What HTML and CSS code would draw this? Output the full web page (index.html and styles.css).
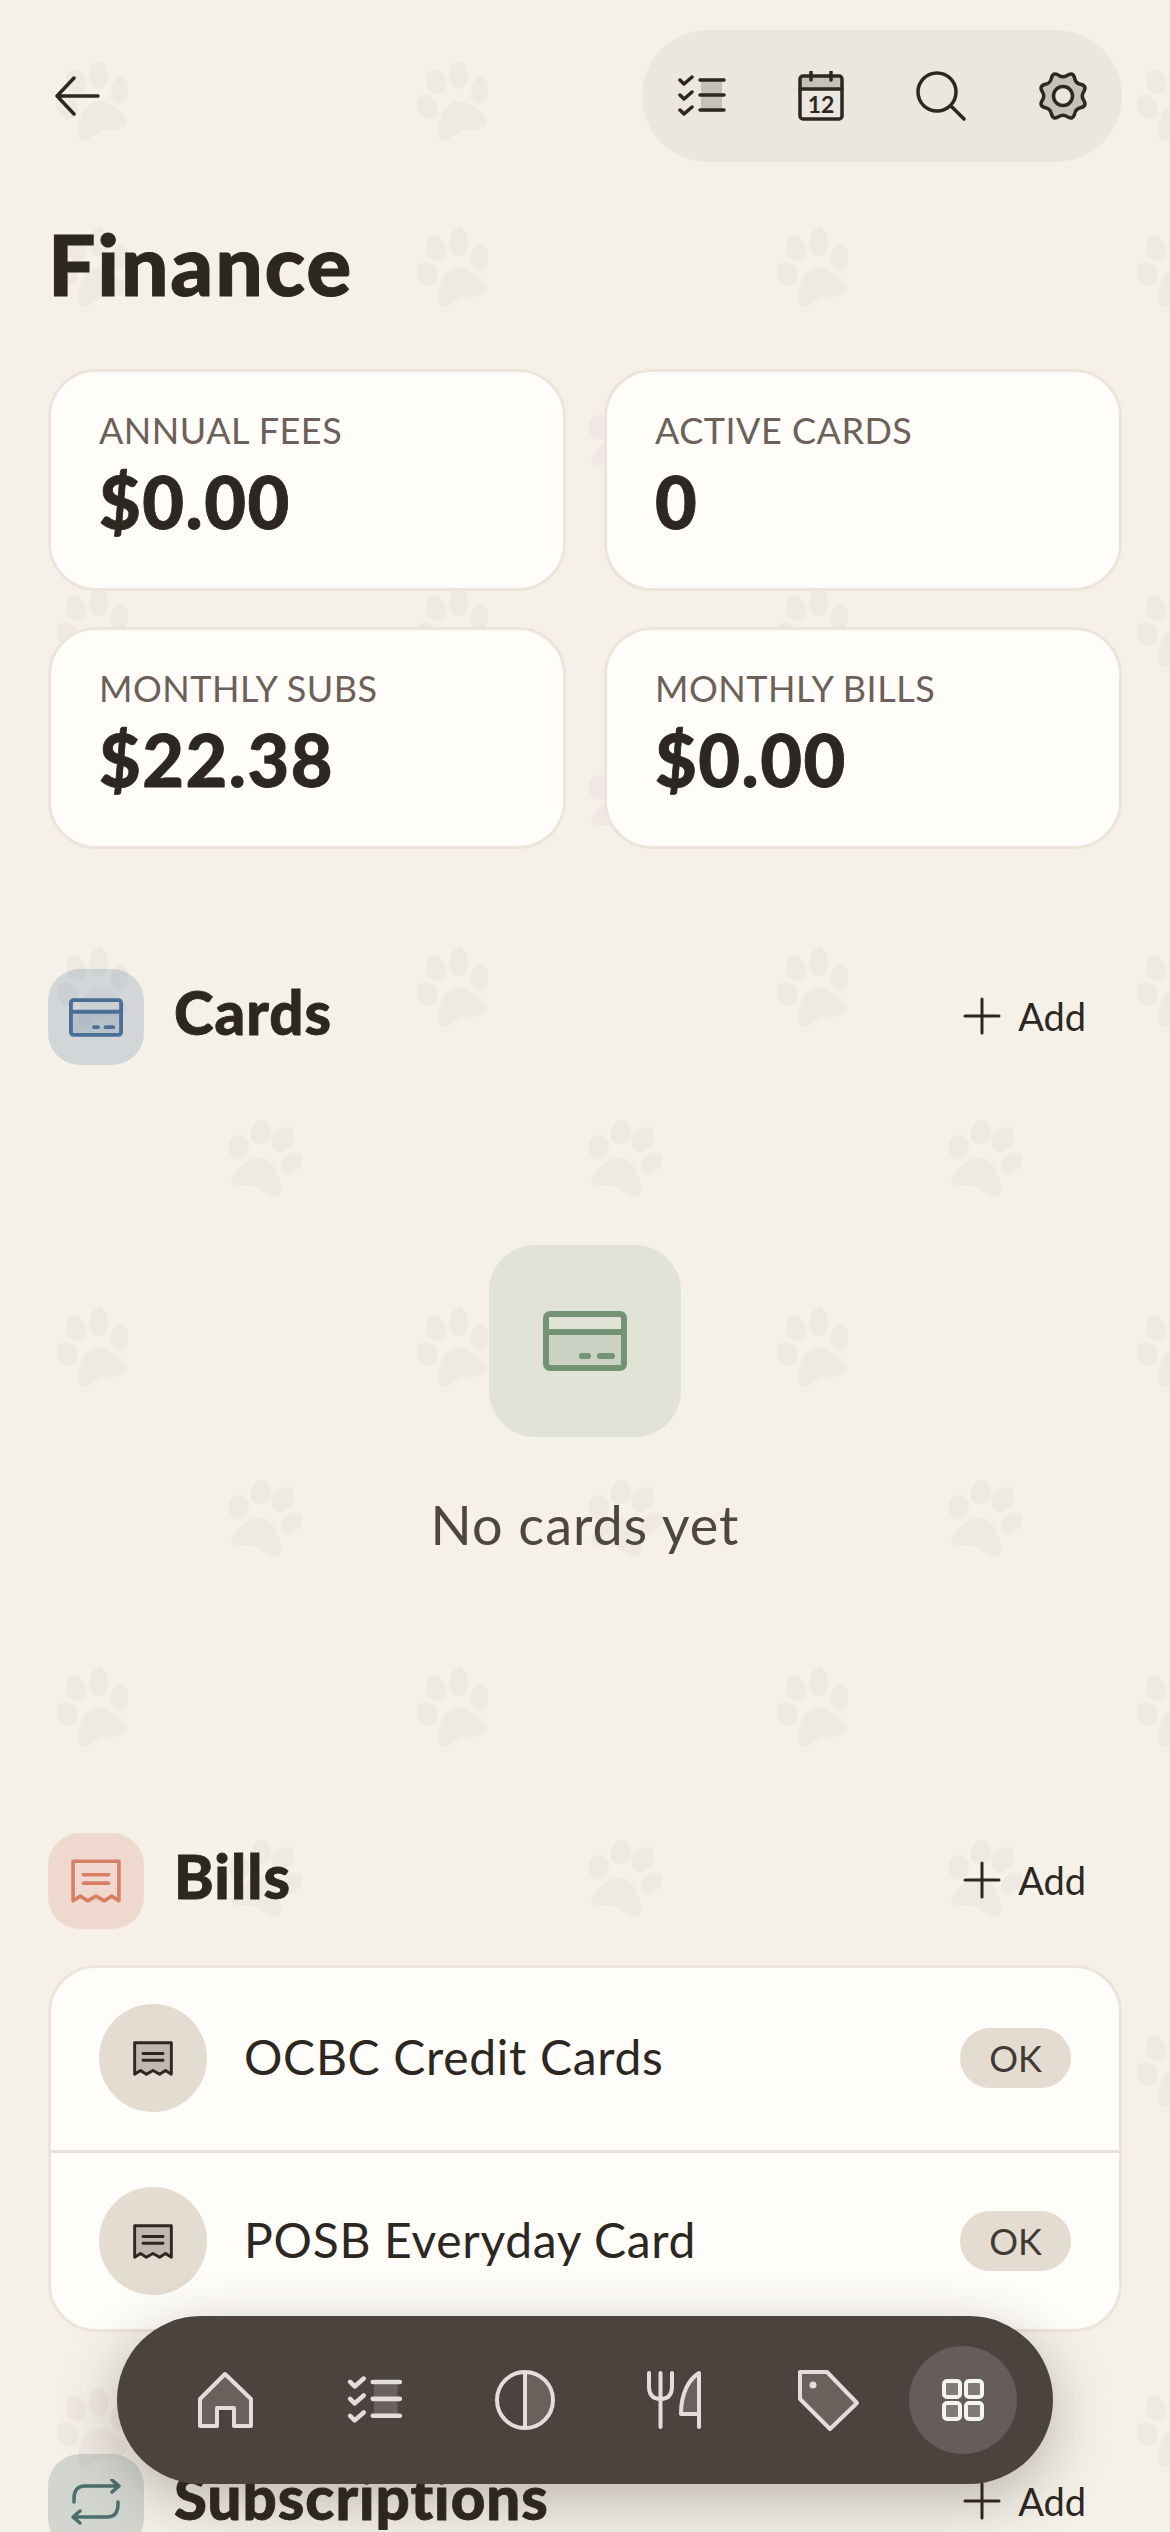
FILE: index.html
```html
<!DOCTYPE html>
<html lang="en">
<head>
    <meta charset="UTF-8">
    <meta name="viewport" content="width=device-width, initial-scale=1.0">
    <title>Finance</title>
    <link rel="stylesheet" href="styles.css">
</head>
<body>
    <div class="screen">
        <!-- paw wallpaper -->
        <svg class="paws" width="1170" height="2532" aria-hidden="true">
            <defs>
                <g id="paw">
                    <g transform="translate(-37.5 -40) scale(0.3333)">
                        <ellipse cx="62" cy="60" rx="30" ry="38" transform="rotate(-20 62 60)"/>
                        <ellipse cx="130" cy="40" rx="29" ry="42"/>
                        <ellipse cx="192" cy="85" rx="26" ry="40" transform="rotate(8 192 85)"/>
                        <ellipse cx="35" cy="135" rx="31" ry="38" transform="rotate(-30 35 135)"/>
                        <path d="M68 215C66 175 85 117 130 117C165 117 215 160 215 175C215 205 175 205 150 203C125 203 100 235 88 235C75 235 68 225 68 215Z"/>
                    </g>
                </g>
                <pattern id="paw-tile" width="360" height="360" patternUnits="userSpaceOnUse">
                    <use href="#paw" transform="translate(93 269)"/>
                    <use href="#paw" transform="translate(263 78) rotate(35)"/>
                </pattern>
            </defs>
            <use href="#paw" transform="translate(93 102)"/>
            <use href="#paw" transform="translate(453 102)"/>
            <use href="#paw" transform="translate(813 102)"/>
            <use href="#paw" transform="translate(1173 102)"/>
            <rect class="paw-fill" y="180" width="1170" height="2352" fill="url(#paw-tile)"/>
        </svg>

        <div class="page">
            <header class="topbar">
                <svg class="icon back" width="46" height="40" viewBox="0 0 46 40"><path d="M44 20H3M20 2L3 20L20 38"/></svg>
                <div class="toolbar">
                    <svg class="icon" width="48" height="46" viewBox="0 0 48 46">
                        <rect class="tint" x="23" y="7" width="21" height="32"/>
                        <path d="M2 7L6 11L14 4M2 22L6 26L14 19M2 37L6 41L14 34M22 7H46M22 22H46M22 37H46"/>
                    </svg>
                    <svg class="icon" width="46" height="50" viewBox="0 0 46 50">
                        <path class="tint" d="M2 6H44V18H2Z"/>
                        <rect x="2" y="5" width="42" height="43" rx="3"/>
                        <path d="M2 18H44M13 1V9M33 1V9"/>
                        <text class="cal-day" x="23" y="42">12</text>
                    </svg>
                    <svg class="icon" width="50" height="50" viewBox="0 0 50 50">
                        <circle cx="21" cy="21" r="19"/>
                        <path d="M35 35L48 48"/>
                    </svg>
                    <svg class="icon" width="50" height="50" viewBox="0 0 50 50">
                        <path class="tint" d="M20.9 4.4Q25 7 29.1 4.4Q35.1 .5 36.7 7.5Q37.7 12.3 42.5 13.3Q49.5 14.9 45.6 20.9Q43 25 45.6 29.1Q49.5 35.1 42.5 36.7Q37.7 37.7 36.7 42.5Q35.1 49.5 29.1 45.6Q25 43 20.9 45.6Q14.9 49.5 13.3 42.5Q12.3 37.7 7.5 36.7Q.5 35.1 4.4 29.1Q7 25 4.4 20.9Q.5 14.9 7.5 13.3Q12.3 12.3 13.3 7.5Q14.9 .5 20.9 4.4Z"/>
                        <path d="M20.9 4.4Q25 7 29.1 4.4Q35.1 .5 36.7 7.5Q37.7 12.3 42.5 13.3Q49.5 14.9 45.6 20.9Q43 25 45.6 29.1Q49.5 35.1 42.5 36.7Q37.7 37.7 36.7 42.5Q35.1 49.5 29.1 45.6Q25 43 20.9 45.6Q14.9 49.5 13.3 42.5Q12.3 37.7 7.5 36.7Q.5 35.1 4.4 29.1Q7 25 4.4 20.9Q.5 14.9 7.5 13.3Q12.3 12.3 13.3 7.5Q14.9 .5 20.9 4.4Z"/>
                        <circle class="gear-hole" cx="25" cy="25" r="9.5"/>
                    </svg>
                </div>
            </header>

            <h1 class="title">Finance</h1>

            <div class="stats">
                <div class="stat">
                    <div class="stat-label">ANNUAL FEES</div>
                    <div class="stat-value">$0.00</div>
                </div>
                <div class="stat">
                    <div class="stat-label">ACTIVE CARDS</div>
                    <div class="stat-value">0</div>
                </div>
                <div class="stat">
                    <div class="stat-label">MONTHLY SUBS</div>
                    <div class="stat-value">$22.38</div>
                </div>
                <div class="stat">
                    <div class="stat-label">MONTHLY BILLS</div>
                    <div class="stat-value">$0.00</div>
                </div>
            </div>

            <section class="section">
                <div class="section-head">
                    <div class="section-icon blue">
                        <svg class="icon card" width="54" height="39" viewBox="0 0 84 60">
                            <rect class="tint" x="3" y="21" width="78" height="36"/>
                            <rect x="3" y="3" width="78" height="54" rx="4"/>
                            <path d="M3 21H81M39 45H45M57 45H69"/>
                        </svg>
                    </div>
                    <h2 class="section-title">Cards</h2>
                    <div class="add">
                        <svg class="icon thin" width="38" height="38" viewBox="0 0 38 38"><path d="M19 2V36M2 19H36"/></svg>
                        <span>Add</span>
                    </div>
                </div>
                <div class="empty">
                    <div class="empty-icon">
                        <svg class="icon card" width="84" height="60" viewBox="0 0 84 60">
                            <rect class="tint" x="3" y="21" width="78" height="36"/>
                            <rect x="3" y="3" width="78" height="54" rx="4"/>
                            <path d="M3 21H81M39 45H45M57 45H69"/>
                        </svg>
                    </div>
                    <p class="empty-text">No cards yet</p>
                </div>
            </section>

            <section class="section">
                <div class="section-head">
                    <div class="section-icon coral">
                        <svg class="icon" width="50" height="44" viewBox="0 0 48 42">
                            <path d="M2 2H46V40L39 35.500L32 40L24 35.500L16 40L9 35.500L2 40Z"/>
                            <path d="M12 15H36M12 23H36"/>
                        </svg>
                    </div>
                    <h2 class="section-title">Bills</h2>
                    <div class="add">
                        <svg class="icon thin" width="38" height="38" viewBox="0 0 38 38"><path d="M19 2V36M2 19H36"/></svg>
                        <span>Add</span>
                    </div>
                </div>
                <div class="list">
                    <div class="list-row">
                        <div class="row-icon">
                            <svg class="icon" width="40" height="35" viewBox="0 0 48 42">
                                <path class="tint" d="M2 2H46V40L39 35.500L32 40L24 35.500L16 40L9 35.500L2 40Z"/>
                                <path d="M2 2H46V40L39 35.500L32 40L24 35.500L16 40L9 35.500L2 40Z"/>
                                <path d="M12 15H36M12 23H36"/>
                            </svg>
                        </div>
                        <span class="row-name">OCBC Credit Cards</span>
                        <span class="pill">OK</span>
                    </div>
                    <div class="list-row">
                        <div class="row-icon">
                            <svg class="icon" width="40" height="35" viewBox="0 0 48 42">
                                <path class="tint" d="M2 2H46V40L39 35.500L32 40L24 35.500L16 40L9 35.500L2 40Z"/>
                                <path d="M2 2H46V40L39 35.500L32 40L24 35.500L16 40L9 35.500L2 40Z"/>
                                <path d="M12 15H36M12 23H36"/>
                            </svg>
                        </div>
                        <span class="row-name">POSB Everyday Card</span>
                        <span class="pill">OK</span>
                    </div>
                </div>
            </section>

            <section class="section subs">
                <div class="section-head">
                    <div class="section-icon teal">
                        <svg class="icon" width="50" height="46" viewBox="0 0 50 46">
                            <path d="M3 23V20Q3 7 14 7H47M41 1L48 7L41 13M47 23V25Q47 38 36 38H3M9 32L2 38L9 44"/>
                        </svg>
                    </div>
                    <h2 class="section-title">Subscriptions</h2>
                    <div class="add">
                        <svg class="icon thin" width="38" height="38" viewBox="0 0 38 38"><path d="M19 2V36M2 19H36"/></svg>
                        <span>Add</span>
                    </div>
                </div>
            </section>
        </div>

        <nav class="nav">
            <div class="nav-item">
                <svg class="icon" width="56" height="58" viewBox="0 0 56 58">
                    <path class="tint" d="M28 3L54 28V55H37V37H20V55H3V28Z"/>
                    <path d="M28 3L54 28V55H37V37H20V55H3V28Z"/>
                </svg>
            </div>
            <div class="nav-item">
                <svg class="icon" width="56" height="52" viewBox="0 0 48 46">
                    <rect class="tint" x="23" y="7" width="21" height="32"/>
                    <path d="M2 7L6 11L14 4M2 22L6 26L14 19M2 37L6 41L14 34M22 7H46M22 22H46M22 37H46"/>
                </svg>
            </div>
            <div class="nav-item">
                <svg class="icon" width="60" height="60" viewBox="0 0 60 60">
                    <path class="tint" d="M30 2A28 28 0 0 1 30 58Z"/>
                    <circle cx="30" cy="30" r="28"/>
                    <path d="M30 2V58"/>
                </svg>
            </div>
            <div class="nav-item">
                <svg class="icon" width="56" height="58" viewBox="0 0 56 58">
                    <path class="tint" d="M52 2C42 8 34 22 34 43H52Z"/>
                    <path d="M2 2V15Q2 28 13.500 28Q25 28 25 15V2M13.500 2V56M52 56V2C42 8 34 22 34 43H52"/>
                </svg>
            </div>
            <div class="nav-item">
                <svg class="icon tag" width="63" height="63" viewBox="0 0 63 63">
                    <path class="tint" d="M3 3H30L60 34L33 60L3 30Z"/>
                    <path d="M3 3H30L60 34L33 60L3 30Z"/>
                    <circle class="dot" cx="16" cy="16" r="3.500"/>
                </svg>
            </div>
            <div class="nav-item active">
                <svg class="icon" width="42" height="42" viewBox="0 0 42 42">
                    <rect class="tint" x="2" y="2" width="16" height="16" rx="3"/>
                    <rect class="tint" x="24" y="2" width="16" height="16" rx="3"/>
                    <rect class="tint" x="2" y="24" width="16" height="16" rx="3"/>
                    <rect class="tint" x="24" y="24" width="16" height="16" rx="3"/>
                    <rect x="2" y="2" width="16" height="16" rx="3"/>
                    <rect x="24" y="2" width="16" height="16" rx="3"/>
                    <rect x="2" y="24" width="16" height="16" rx="3"/>
                    <rect x="24" y="24" width="16" height="16" rx="3"/>
                </svg>
            </div>
        </nav>
    </div>
</body>
</html>
```

FILE: styles.css
```css
* {
    box-sizing: border-box;
}
body {
    margin: 0;
    font-family: Lato, "Noto Sans", sans-serif;
    color: #2d2722;
    background: #f5f1e9;
}
.screen {
    position: relative;
    width: 1170px;
    height: 2532px;
    overflow: hidden;
    background: #f5f1e9;
}
.paws {
    position: absolute;
    top: 0;
    left: 0;
    fill: #2d2722;
    fill-opacity: 0.035;
}
.paws .paw-fill {
    fill-opacity: 1;
}
.page {
    position: relative;
    padding: 30px 48px 0;
}

/* icons: stroke + soft tinted fill */
.icon {
    display: block;
    flex: none;
    fill: none;
    stroke: currentColor;
    stroke-width: 3.5;
    stroke-linecap: round;
    stroke-linejoin: round;
}
.icon .tint {
    fill: currentColor;
    fill-opacity: 0.2;
    stroke: none;
}
.icon.thin {
    stroke-width: 3;
}
.icon.card {
    stroke-width: 6;
}

/* top */
.topbar {
    display: flex;
    justify-content: space-between;
    align-items: center;
    height: 132px;
}
.back {
    margin-left: 6px;
}
.toolbar {
    display: flex;
    justify-content: space-between;
    align-items: center;
    width: 480px;
    height: 132px;
    padding: 0 34px 0 36px;
    background: #ebe6df;
    border-radius: 66px;
}
.cal-day {
    font-family: Lato, sans-serif;
    font-size: 23px;
    font-weight: 700;
    text-anchor: middle;
    fill: currentColor;
    stroke: none;
}
.gear-hole {
    fill: #ebe6df;
}
.title {
    margin: 52px 0 55px;
    font-size: 84px;
    line-height: 100px;
    font-weight: 900;
    letter-spacing: 1.8px;
    -webkit-text-stroke: 1px #2d2722;
}

/* stats */
.stats {
    display: grid;
    grid-template-columns: 1fr 1fr;
    gap: 36px 38px;
}
.stat {
    height: 222px;
    padding: 34px 48px;
    background: #fffdf9;
    border: 3px solid #ebe5dc;
    border-radius: 48px;
}
.stat-label {
    font-size: 36px;
    line-height: 48px;
    letter-spacing: 0.5px;
    color: #6c6058;
}
.stat-value {
    margin-top: 5px;
    font-size: 72px;
    line-height: 84px;
    font-weight: 900;
    letter-spacing: 1.5px;
    -webkit-text-stroke: 0.8px #2d2722;
}

/* sections */
.section {
    margin-top: 120px;
}
.section-head {
    display: flex;
    align-items: center;
    height: 96px;
}
.section-icon {
    display: flex;
    justify-content: center;
    align-items: center;
    width: 96px;
    height: 96px;
    margin-right: 30px;
    border-radius: 32px;
}
.section-icon.blue {
    color: #4a6f96;
    background: rgba(74, 111, 150, 0.2);
}
.section-icon.coral {
    color: #d97f66;
    background: rgba(217, 127, 102, 0.2);
}
.section-icon.teal {
    color: #4a6f6c;
    background: rgba(74, 111, 108, 0.2);
}
.section-title {
    flex: 1;
    margin: 0;
    padding-bottom: 10px;
    font-size: 60px;
    font-weight: 900;
    letter-spacing: 1px;
    -webkit-text-stroke: 0.8px #2d2722;
}
.add {
    display: flex;
    align-items: center;
    gap: 17px;
    padding-right: 36px;
    padding-bottom: 2px;
    font-size: 38px;
}

.empty {
    display: flex;
    flex-direction: column;
    align-items: center;
    padding-top: 180px;
    height: 648px;
}
.empty-icon {
    display: flex;
    justify-content: center;
    align-items: center;
    width: 192px;
    height: 192px;
    color: #749375;
    background: rgba(116, 147, 117, 0.15);
    border-radius: 46px;
}
.empty-text {
    margin: 56px 0 0;
    font-size: 54px;
    line-height: 64px;
    letter-spacing: 1px;
    color: #4f4640;
}
.list {
    margin-top: 36px;
    background: #fffdf9;
    border: 3px solid #ebe5dc;
    border-radius: 48px;
}
.list-row {
    display: flex;
    align-items: center;
    height: 182px;
    padding: 0 48px 2px;
}
.list-row + .list-row {
    height: 179px;
    padding-bottom: 0;
    border-top: 3px solid #e8e0d6;
}
.row-icon {
    display: flex;
    justify-content: center;
    align-items: center;
    width: 108px;
    height: 108px;
    margin-right: 37px;
    background: #e5dcd1;
    border-radius: 50%;
}
.row-name {
    flex: 1;
    padding-bottom: 4px;
    font-size: 48px;
    letter-spacing: 0.7px;
}
.pill {
    width: 111px;
    height: 60px;
    font-size: 36px;
    line-height: 60px;
    text-align: center;
    color: #3f3a35;
    background: #e5dcd1;
    border-radius: 30px;
}
.section.subs {
    margin-top: 122px;
}

/* floating nav */
.nav {
    position: absolute;
    left: 117px;
    top: 2316px;
    display: flex;
    align-items: center;
    gap: 42px;
    width: 936px;
    height: 168px;
    padding-left: 54px;
    color: #e3ded9;
    background: #4b433e;
    border-radius: 84px;
    box-shadow: 0 16px 60px rgba(45, 39, 34, 0.3);
}
.nav-item {
    display: flex;
    justify-content: center;
    align-items: center;
    width: 108px;
    height: 108px;
}
.nav-item .icon {
    stroke-width: 4;
}
.nav-item .tag {
    margin-left: 6px;
}
.nav-item .dot {
    fill: currentColor;
    stroke: none;
}
.nav-item.active {
    margin-left: -12px;
    color: #f6f3f0;
    background: #655d59;
    border-radius: 50%;
}
```
